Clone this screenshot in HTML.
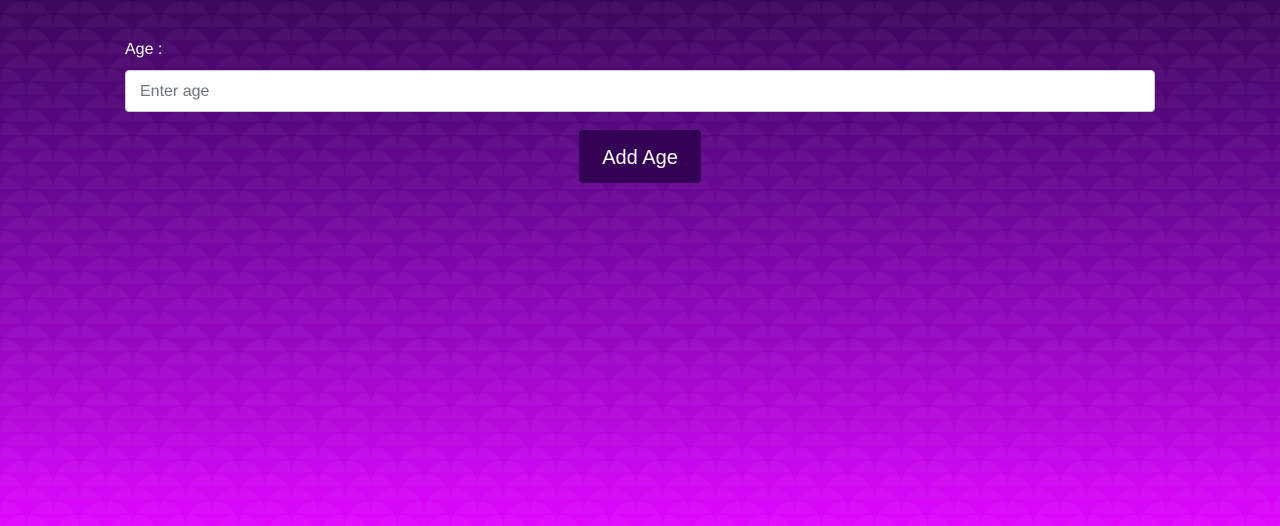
<!DOCTYPE html>
<html><head><meta charset="utf-8"><style>
html,body{margin:0;height:526px;overflow:hidden}
body{width:1280px;height:526px;position:relative;font-family:"Liberation Sans",sans-serif;
background:
radial-gradient(circle at 50% 100%, rgba(255,255,255,0.03) 0 26px, rgba(0,0,0,0.03) 26.5px, transparent 27px) 0 0/53px 27px,
radial-gradient(circle at 50% 100%, rgba(255,255,255,0.03) 0 26px, rgba(0,0,0,0.03) 26.5px, transparent 27px) 26.5px 13.5px/53px 27px,
linear-gradient(#370058 0%, #55007f 25%, #7a00a8 50%, #a800d2 75%, #df00ff 100%);}
label{position:absolute;left:125px;top:41px;color:#fff;font-size:16px}
.inp{position:absolute;left:125px;top:70px;width:1028px;height:40px;background:#fff;border:1px solid #ccc;border-radius:4px;box-sizing:content-box}
.inp span{position:absolute;left:14px;top:12px;color:#6c757d;font-size:16px}
.btn{position:absolute;left:579px;top:130px;width:122px;height:53px;background:#330055;border-radius:4px;color:#fff;font-size:20px;text-align:center;line-height:56px}
</style></head><body>
<label>Age :</label>
<div class="inp"><span>Enter age</span></div>
<div class="btn">Add Age</div>
</body></html>
